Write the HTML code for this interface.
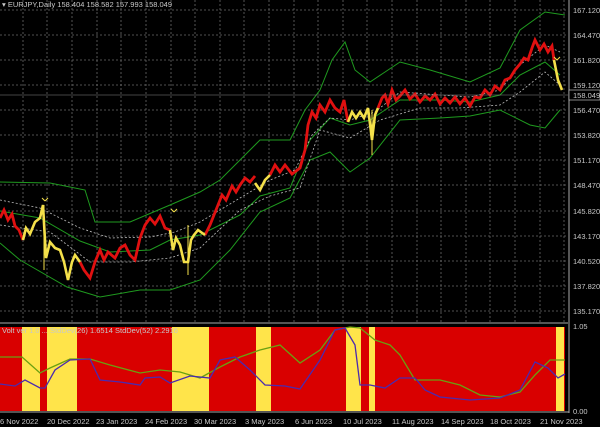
<!DOCTYPE html>
<html><head><meta charset="utf-8"><style>
body{margin:0;background:#000;width:600px;height:427px;overflow:hidden;font-family:"Liberation Sans",sans-serif}
svg{display:block}
text{font-family:"Liberation Sans",sans-serif;font-size:7.5px;fill:#c8c8c8}
</style></head><body>
<svg width="600" height="427" viewBox="0 0 600 427">
<rect width="600" height="427" fill="#000"/>
<g stroke="#6a6a6a" stroke-width="0.8" stroke-dasharray="2,2">
<path d="M0 10H568M0 35H568M0 60H568M0 85H568M0 110H568M0 135H568M0 160H568M0 185H568M0 211H568M0 236H568M0 261H568M0 286H568M0 311H568"/>
<path d="M23 0V322M47 0V322M72 0V322M97 0V322M121 0V322M146 0V322M171 0V322M195 0V322M220 0V322M244 0V322M269 0V322M294 0V322M318 0V322M343 0V322M367 0V322M392 0V322M417 0V322M441 0V322M466 0V322M490 0V322M515 0V322M540 0V322M564 0V322"/>
</g>
<g fill="none" stroke="#1f9a1f" stroke-width="1">
<path d="M0 182L50 183L85 190L95 222L130 222L170 205L200 192L220 180L240 160L260 140L290 140L305 110L320 90L332 60L345 42L355 70L370 82L400 62L430 70L470 82L500 68L520 30L545 12L565 15"/>
<path d="M0 211L40 218L80 241L110 252L150 250L170 240L200 235L240 215L260 196L290 188L310 140L330 118L350 125L370 120L400 100L440 100L470 102L500 95L520 75L545 62L560 75"/>
<path d="M0 243L20 260L67 287L100 297L140 290L170 290L200 280L230 250L260 212L290 198L310 160L330 152L350 172L370 158L400 120L440 118L470 116L500 110L530 125L545 128L560 110"/>
</g>
<path d="M0 200L40 208L80 228L110 238L150 237L175 232L200 222L240 198L270 180L295 170L312 135L330 118L350 120L375 112L400 92L440 95L470 97L500 90L520 65L545 45L560 52" fill="none" stroke="#bbb" stroke-width="0.8" stroke-dasharray="2,2"/>
<path d="M0 225L50 232L90 262L130 262L170 258L200 248L240 210L270 196L300 188L320 130L350 138L380 120L420 108L460 108L500 105L520 92L545 72L560 85" fill="none" stroke="#bbb" stroke-width="0.8" stroke-dasharray="2,2"/>
<path d="M0 218L4 210L8 220L12 214L15 226L19 230L23 240M80 262L84 270L90 278L95 262L100 250L104 260L108 252L115 258L120 248L125 245L130 255L135 260L140 238L145 225L150 218L155 224L160 216L165 228L170 230M205 235L210 225L214 215L218 205L222 195L226 200L232 186L236 192L240 185L245 178L250 182L255 176M270 175L275 165L280 172L285 165L292 174L300 168L305 150L308 125L312 112L316 118L320 105L325 112L330 100L335 108L340 112L344 100L348 122M378 108L382 98L385 95L388 104L392 90L396 100L400 96L405 90L410 99L415 94L420 102L425 96L430 100L435 94L440 104L445 98L450 103L455 97L460 104L465 98L470 106L475 97L480 98L485 90L490 95L495 86L500 90L505 80L510 78L515 70L520 64L524 58L528 60L532 48L535 40L540 50L544 44L548 52L552 46L554 60" fill="none" stroke="#e01010" stroke-width="2.8" stroke-linejoin="miter"/>
<path d="M23 240L26 228L30 234L35 222L40 218L43 205L46 258L50 242L55 248L60 250L64 262L68 280L72 262L75 255L80 262M170 230L173 250L176 238L180 245L184 262L188 262L191 240L194 235L198 230L205 235M255 183L260 190L265 180L270 175M348 122L352 112L356 118L360 112L364 118L368 108L372 140L375 115L378 108M554 60L558 80L562 90" fill="none" stroke="#f4e04a" stroke-width="2.6" stroke-linejoin="miter"/>
<path d="M44 205V270M188 225V275M372 110V155M45 201l-3 -3M45 201l3 -3M174 212l-3 -3M174 212l3 -3M557 60l-3 -3M557 60l3 -3" stroke="#f4e04a" stroke-width="1"/>
<line x1="0" x2="568" y1="95" y2="95" stroke="#888" stroke-width="0.6"/>
<line x1="0" x2="568" y1="323" y2="323" stroke="#aaa" stroke-width="1"/>
<rect x="0" y="327" width="565" height="84" fill="#d90000"/>
<g fill="#ffe44a">
<rect x="22" y="327" width="18" height="84"/>
<rect x="47" y="327" width="30" height="84"/>
<rect x="172" y="327" width="37" height="84"/>
<rect x="256" y="327" width="15" height="84"/>
<rect x="346" y="327" width="15" height="84"/>
<rect x="369" y="327" width="6" height="84"/>
<rect x="556" y="327" width="8" height="84"/>
</g>
<path d="M0 357L22 357L40 373L50 368L70 359L90 359L110 365L140 373L160 370L180 372L200 378L220 367L240 357L260 350L280 345L300 363L320 350L335 330L350 327L360 328L375 340L390 345L400 355L415 380L440 380L460 385L480 395L500 397L520 392L535 375L550 360L565 360" fill="none" stroke="#6aa010" stroke-width="1.3"/>
<path d="M0 384L15 386L25 380L40 388L45 388L55 370L70 360L90 359L100 380L120 382L140 385L145 378L160 377L170 383L190 376L210 378L220 360L235 357L250 370L265 385L285 386L300 389L320 360L335 330L345 328L355 345L360 385L370 385L385 388L400 378L415 378L425 390L440 397L470 400L500 398L520 390L535 362L548 368L558 378L565 374" fill="none" stroke="#4a2ab0" stroke-width="1.3"/>
<text x="2" y="333" fill="#eee">Volt ver 1.0 ... StdDev(26) 1.6514  StdDev(52) 2.2916</text>
<line x1="569" x2="569" y1="0" y2="413" stroke="#aaa" stroke-width="1"/>
<line x1="0" x2="569" y1="412" y2="412" stroke="#aaa" stroke-width="1"/>
<g>
<text x="573" y="13">167.120</text><text x="573" y="38">164.470</text><text x="573" y="63">161.820</text><text x="573" y="88">159.120</text>
<text x="573" y="113">156.470</text><text x="573" y="138">153.820</text><text x="573" y="163">151.170</text><text x="573" y="188">148.470</text>
<text x="573" y="214">145.820</text><text x="573" y="239">143.170</text><text x="573" y="264">140.520</text><text x="573" y="289">137.820</text>
<text x="573" y="314">135.170</text><text x="573" y="329">1.05</text><text x="573" y="414">0.00</text>
</g>
<rect x="569" y="90" width="31" height="10" fill="#000" stroke="#ddd" stroke-width="0.6"/>
<text x="573" y="98" fill="#fff">158.049</text>
<g>
<text x="0" y="424">6 Nov 2022</text><text x="47" y="424">20 Dec 2022</text><text x="96" y="424">23 Jan 2023</text>
<text x="145" y="424">24 Feb 2023</text><text x="194" y="424">30 Mar 2023</text><text x="245" y="424">3 May 2023</text>
<text x="295" y="424">6 Jun 2023</text><text x="343" y="424">10 Jul 2023</text><text x="392" y="424">11 Aug 2023</text>
<text x="441" y="424">14 Sep 2023</text><text x="490" y="424">18 Oct 2023</text><text x="540" y="424">21 Nov 2023</text>
</g>
<text x="2" y="7" fill="#ddd">▾ EURJPY,Daily  158.404 158.582 157.993 158.049</text>
</svg>
</body></html>
